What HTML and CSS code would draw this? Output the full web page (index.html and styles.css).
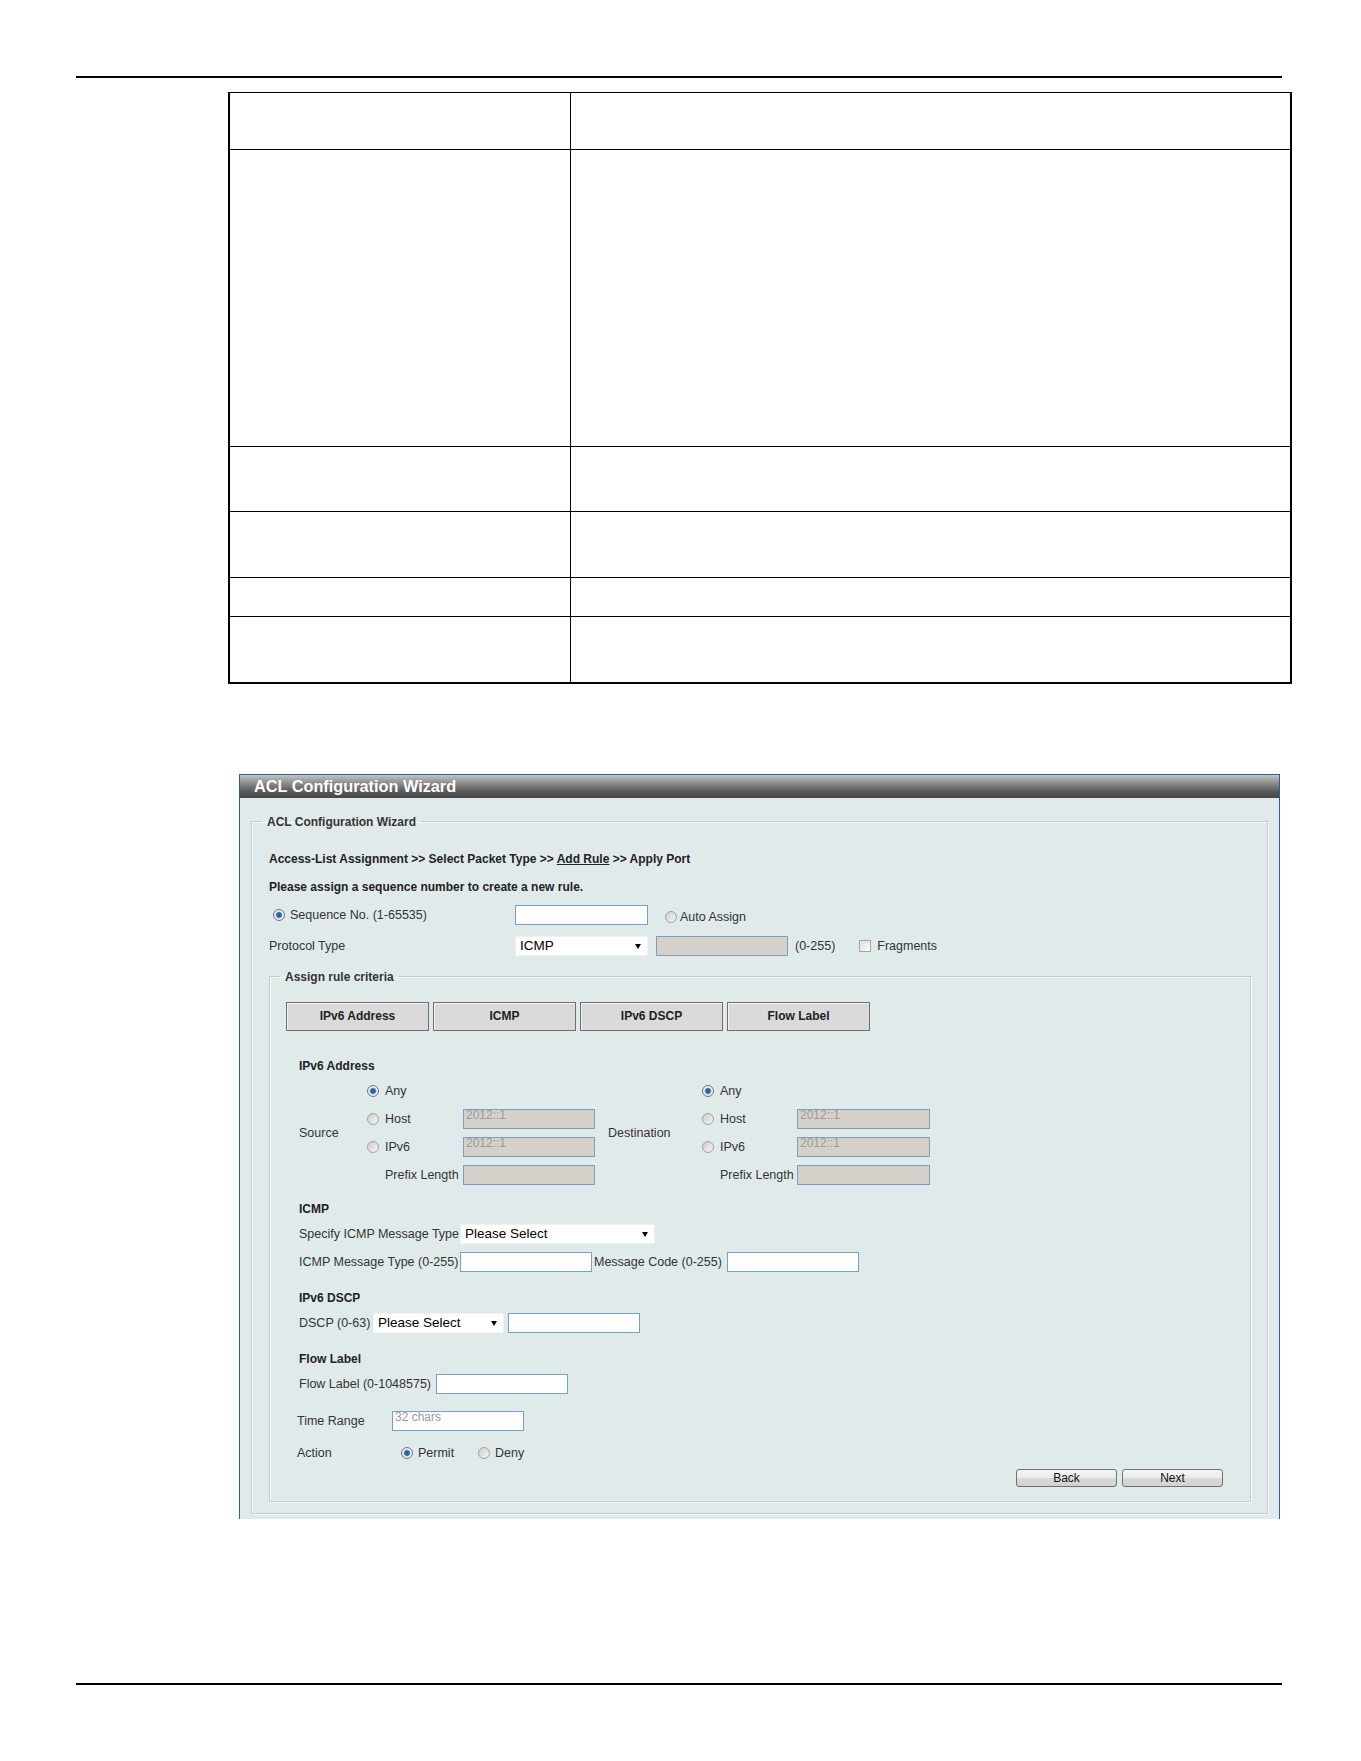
FILE: index.html
```html
<!DOCTYPE html>
<html lang="en">
<head>
    <meta charset="UTF-8">
    <meta name="viewport" content="width=device-width, initial-scale=1.0">
    <title>ACL Configuration Wizard</title>
    <link rel="stylesheet" href="styles.css">
</head>
<body>
    <div class="sheet">
        <div class="rule"></div>

        <table class="desc">
            <tr class="r1"><td class="c-name"></td><td></td></tr>
            <tr class="r2"><td class="c-name"></td><td></td></tr>
            <tr class="r3"><td class="c-name"></td><td></td></tr>
            <tr class="r4"><td class="c-name"></td><td></td></tr>
            <tr class="r5"><td class="c-name"></td><td></td></tr>
            <tr class="r6"><td class="c-name"></td><td></td></tr>
        </table>

        <div class="panel">
            <div class="panel-title">ACL Configuration Wizard</div>
            <div class="panel-body">
                <fieldset class="box outer">
                    <legend>ACL Configuration Wizard</legend>

                    <div class="crumbs">Access-List Assignment &gt;&gt; Select Packet Type &gt;&gt; <u>Add Rule</u> &gt;&gt; Apply Port</div>
                    <div class="note">Please assign a sequence number to create a new rule.</div>

                    <div class="row seq-row">
                        <label class="opt seq-opt"><input class="rd" type="radio" name="seq" checked>Sequence No. (1-65535)</label>
                        <input class="txt w133" type="text">
                        <label class="opt auto-opt"><input class="rd" type="radio" name="seq">Auto Assign</label>
                    </div>

                    <div class="row proto-row">
                        <span class="lbl proto-lbl">Protocol Type</span>
                        <span class="sel w133"><select><option>ICMP</option></select></span>
                        <input class="txt off gap8" type="text" disabled>
                        <span class="lbl range">(0-255)</span>
                        <label class="opt frag"><input class="cb" type="checkbox">Fragments</label>
                    </div>

                    <fieldset class="box inner">
                        <legend>Assign rule criteria</legend>

                        <div class="tabs">
                            <button class="tab">IPv6 Address</button>
                            <button class="tab">ICMP</button>
                            <button class="tab">IPv6 DSCP</button>
                            <button class="tab">Flow Label</button>
                        </div>

                        <div class="sect">
                            <div class="head first">IPv6 Address</div>
                            <div class="addr">
                                <span class="side src">Source</span>
                                <label class="opt c2 r-1"><input class="rd" type="radio" name="src" checked>Any</label>
                                <label class="opt c2 r-2"><input class="rd" type="radio" name="src">Host</label>
                                <input class="txt off c3 r-2" type="text" value="2012::1" disabled>
                                <label class="opt c2 r-3"><input class="rd" type="radio" name="src">IPv6</label>
                                <input class="txt off c3 r-3" type="text" value="2012::1" disabled>
                                <span class="lbl pfx c2 r-4">Prefix Length</span>
                                <input class="txt off c3 r-4" type="text" disabled>

                                <span class="side dst">Destination</span>
                                <label class="opt c6 r-1"><input class="rd" type="radio" name="dst" checked>Any</label>
                                <label class="opt c6 r-2"><input class="rd" type="radio" name="dst">Host</label>
                                <input class="txt off c7 r-2" type="text" value="2012::1" disabled>
                                <label class="opt c6 r-3"><input class="rd" type="radio" name="dst">IPv6</label>
                                <input class="txt off c7 r-3" type="text" value="2012::1" disabled>
                                <span class="lbl pfx c6 r-4">Prefix Length</span>
                                <input class="txt off c7 r-4" type="text" disabled>
                            </div>

                            <div class="head">ICMP</div>
                            <div class="row line">
                                <span class="lbl w161">Specify ICMP Message Type</span>
                                <span class="sel w195"><select><option>Please Select</option></select></span>
                            </div>
                            <div class="row line">
                                <span class="lbl w161">ICMP Message Type (0-255)</span>
                                <input class="txt" type="text">
                                <span class="lbl code">Message Code (0-255)</span>
                                <input class="txt" type="text">
                            </div>

                            <div class="head">IPv6 DSCP</div>
                            <div class="row line">
                                <span class="lbl w74">DSCP (0-63)</span>
                                <span class="sel w131"><select><option>Please Select</option></select></span>
                                <input class="txt gap4" type="text">
                            </div>

                            <div class="head">Flow Label</div>
                            <div class="row line">
                                <span class="lbl w137">Flow Label (0-1048575)</span>
                                <input class="txt" type="text">
                            </div>
                        </div>

                        <div class="row time-row">
                            <span class="lbl w95">Time Range</span>
                            <input class="txt hint" type="text" placeholder="32 chars">
                        </div>

                        <div class="row act-row">
                            <span class="lbl w105">Action</span>
                            <label class="opt permit"><input class="rd" type="radio" name="act" checked>Permit</label>
                            <label class="opt"><input class="rd" type="radio" name="act">Deny</label>
                        </div>

                        <div class="actions">
                            <button class="btn">Back</button>
                            <button class="btn">Next</button>
                        </div>
                    </fieldset>
                </fieldset>
            </div>
        </div>

        <div class="rule bottom"></div>
    </div>

    <div class="edge">
        <span class="edge-line"></span>
        <span class="edge-bits"><i></i><i></i><i></i><i></i><i></i></span>
    </div>
</body>
</html>
```

FILE: styles.css
```css
body {
    margin: 0;
    background: #fff;
    font-family: "Liberation Sans", Arial, sans-serif;
    font-size: 12.5px;
    color: #333;
}
.sheet {
    width: 1206px;
    margin-left: 76px;
}
.rule {
    height: 2px;
    background: #000;
    margin-top: 76px;
}
.rule.bottom {
    margin-top: 164px;
}

/* parameter table, cells left blank */
.desc {
    margin: 14px 0 0 152px;
    width: 1064px;
    border-collapse: collapse;
    border-top: 1px solid #000;
    border-bottom: 2px solid #000;
    border-left: 2px solid #000;
    border-right: 2px solid #000;
}
.desc td {
    border: 1px solid #000;
    padding: 0;
}
.desc td.c-name {
    width: 340px;
}
.desc .r1 { height: 57px; }
.desc .r2 { height: 297px; }
.desc .r3 { height: 65px; }
.desc .r4 { height: 66px; }
.desc .r5 { height: 39px; }
.desc .r6 { height: 66px; }

/* wizard window */
.panel {
    margin: 90px 0 0 163px;
    width: 1041px;
    box-sizing: border-box;
    border: 1px solid #2d5f92;
    border-bottom: none;
    background: #e1eaea;
}
.panel-title {
    height: 23px;
    line-height: 23px;
    padding-left: 14px;
    color: #fff;
    font-size: 16.3px;
    font-weight: bold;
    background: linear-gradient(to bottom, #c4c4c4 0%, #8d8d8d 35%, #5a5a5a 70%, #474747 100%);
}
.panel-body {
    padding: 17px 11px 5px 11px;
}

.box {
    margin: 0;
    min-width: 0;
    border: 1px solid #c3cdcd;
    box-shadow: inset 1px 1px 0 #f7fafa, 1px 1px 0 #f7fafa;
}
.box legend {
    font-weight: bold;
    font-size: 12px;
    line-height: 14px;
    color: #333;
    padding: 0 5px;
    margin-left: -7px;
}
.outer {
    padding: 0 16px 11px 17px;
}
.inner {
    margin-top: 13px;
    padding: 0 17px 14px 17px;
}

.crumbs {
    margin-top: 22px;
    line-height: 16px;
    font-size: 12px;
    font-weight: bold;
    color: #222;
}
.crumbs u {
    text-decoration: underline;
}
.note {
    margin-top: 12px;
    line-height: 16px;
    font-size: 12px;
    font-weight: bold;
    color: #222;
}

.row {
    display: flex;
    align-items: center;
    height: 22px;
}
.lbl {
    white-space: nowrap;
    flex: none;
}
.opt {
    display: flex;
    align-items: center;
    white-space: nowrap;
    flex: none;
}
.opt input {
    margin: 0 5px 0 0;
}

.seq-row {
    margin-top: 9px;
}
.seq-opt {
    padding-left: 4px;
    width: 242px;
}
.auto-opt {
    margin: 4px 0 0 17px;
}
.auto-opt input {
    margin-right: 3px;
}
.proto-row {
    margin-top: 9px;
}
.proto-lbl {
    width: 246px;
}
.range {
    margin-left: 7px;
}
.frag {
    margin-left: 24px;
}
.frag input {
    margin-right: 6px;
}

/* form controls */
.txt {
    box-sizing: border-box;
    width: 132px;
    height: 20px;
    margin: 0;
    padding: 0 2px;
    border: 1px solid #7a9ec6;
    background: #fff;
    font-family: "Liberation Sans", Arial, sans-serif;
    font-size: 12px;
    color: #333;
    flex: none;
}
.txt.off {
    background: #d5d1ca;
    color: #9a9a9a;
    padding-bottom: 7px;
    -webkit-text-fill-color: #9a9a9a;
    opacity: 1;
}
.txt.hint {
    padding-bottom: 7px;
}
.txt.hint::placeholder {
    color: #9a9a9a;
}
.w133 { width: 133px; }
.gap8 { margin-left: 8px; }
.gap4 { margin-left: 4px; }

.sel {
    position: relative;
    display: inline-block;
    flex: none;
    height: 20px;
}
.sel select {
    appearance: none;
    -webkit-appearance: none;
    box-sizing: border-box;
    width: 100%;
    height: 20px;
    margin: 0;
    padding: 0 0 0 4px;
    border: 1px solid #f1f1f1;
    border-radius: 0;
    background: #fff;
    font-family: "Liberation Sans", Arial, sans-serif;
    font-size: 13.5px;
    color: #000;
}
.sel::after {
    content: "";
    position: absolute;
    right: 7px;
    top: 8px;
    border-left: 3.5px solid transparent;
    border-right: 3.5px solid transparent;
    border-top: 5px solid #000;
    pointer-events: none;
}
.sel.w133 { width: 133px; }
.sel.w195 { width: 195px; }
.sel.w131 { width: 131px; }

.rd {
    appearance: none;
    -webkit-appearance: none;
    box-sizing: border-box;
    width: 12px;
    height: 12px;
    border-radius: 50%;
    border: 1px solid #a2a2a2;
    background: linear-gradient(135deg, #cdcdcd, #f6f6f6);
    flex: none;
}
.rd:checked {
    border-color: #777;
    background: radial-gradient(circle, #1d5799 0, #2f6fb5 2.4px, #9dbde0 3.2px, #f3f3f3 3.8px, #d6d6d6 6px);
}
.cb {
    appearance: none;
    -webkit-appearance: none;
    box-sizing: border-box;
    width: 12px;
    height: 12px;
    border: 1px solid #a4a4a4;
    background: linear-gradient(135deg, #dcdcdc, #fdfdfd);
    flex: none;
}

/* criteria buttons */
.tabs {
    display: flex;
    gap: 4px;
    margin-top: 18px;
    margin-left: -1px;
}
.tab {
    box-sizing: border-box;
    width: 143px;
    height: 29px;
    margin: 0;
    border: 1px solid #6f6f6f;
    background: #dadada;
    box-shadow: inset 1px 1px 0 #f2f2f2;
    font-family: "Liberation Sans", Arial, sans-serif;
    font-size: 12px;
    font-weight: bold;
    color: #222;
}

.sect {
    padding-left: 12px;
}
.head {
    margin-top: 12px;
    line-height: 16px;
    font-size: 12px;
    font-weight: bold;
    color: #222;
}
.head.first {
    margin-top: 27px;
}
.sect .head + .line {
    margin-top: 6px;
}
.line + .line {
    margin-top: 6px;
}
.sect .line + .head {
    margin-top: 17px;
}

/* source / destination block */
.addr {
    display: grid;
    grid-template-columns: 68px 96px 132px 13px 94px 95px 133px;
    grid-template-rows: repeat(4, 28px);
    align-items: center;
    margin-top: 3px;
}
.side {
    grid-row: 1 / span 4;
    align-self: center;
}
.src { grid-column: 1; }
.dst { grid-column: 5; }
.c2 { grid-column: 2; }
.c3 { grid-column: 3; }
.c6 { grid-column: 6; }
.c7 { grid-column: 7; width: 133px; }
.r-1 { grid-row: 1; }
.r-2 { grid-row: 2; }
.r-3 { grid-row: 3; }
.r-4 { grid-row: 4; }
.addr .opt input {
    margin-right: 6px;
}
.pfx {
    padding-left: 18px;
}

.w161 { width: 161px; }
.w74 { width: 74px; }
.w137 { width: 137px; }
.w95 { width: 95px; }
.w105 { width: 105px; }
.code {
    margin-left: 2px;
    width: 133px;
}

.time-row {
    margin-top: 15px;
    padding-left: 10px;
}
.act-row {
    margin-top: 10px;
    padding-left: 10px;
}
.act-row .w105 {
    width: 104px;
}
.permit {
    width: 77px;
}

.actions {
    display: flex;
    justify-content: flex-end;
    gap: 5px;
    margin-top: 5px;
    padding-right: 10px;
}
.btn {
    box-sizing: border-box;
    width: 101px;
    height: 18px;
    margin: 0;
    padding: 0;
    border: 1px solid #707070;
    border-radius: 3px;
    background: linear-gradient(to bottom, #f5f5f5 0%, #ebebeb 50%, #dadada 51%, #d2d2d2 100%);
    font-family: "Liberation Sans", Arial, sans-serif;
    font-size: 12px;
    color: #111;
}

/* next sheet edge */
.edge {
    display: flex;
    align-items: flex-end;
    margin-top: 76px;
    height: 1px;
}
.edge-line {
    width: 1196px;
    height: 1px;
    background: #222;
}
.edge-bits {
    display: flex;
    gap: 6px;
    margin-left: 8px;
}
.edge-bits i {
    width: 7px;
    height: 1px;
    background: #444;
}
```
